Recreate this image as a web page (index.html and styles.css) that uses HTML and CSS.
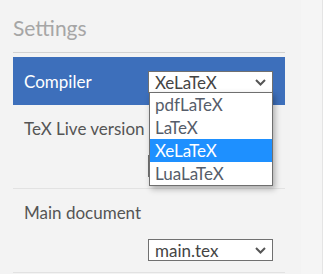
FILE: index.html
```
<!DOCTYPE html>
<html>
<head>
    <meta charset="utf-8">
    <title>Settings</title>
    <link rel="stylesheet" href="styles.css">
</head>
<body>
    <div class="settings">
        <div class="heading">Settings</div>

        <div class="row row-active">
            <span class="label">Compiler</span>
            <div class="select-wrap">
                <div class="select">
                    <span>XeLaTeX</span>
                    <svg class="chevron" width="11" height="7" viewBox="0 0 11 7"><polyline points="1,1 5.5,5.5 10,1" fill="none" stroke="#555" stroke-width="2"/></svg>
                </div>
                <!-- open dropdown list -->
                <ul class="options">
                    <li class="option">pdfLaTeX</li>
                    <li class="option">LaTeX</li>
                    <li class="option option-selected">XeLaTeX</li>
                    <li class="option">LuaLaTeX</li>
                </ul>
            </div>
        </div>

        <div class="row row-stacked">
            <span class="label">TeX Live version</span>
            <!-- hidden under the open list -->
            <div class="select"></div>
        </div>

        <div class="row row-stacked">
            <span class="label">Main document</span>
            <div class="select">
                <span>main.tex</span>
                <svg class="chevron" width="11" height="7" viewBox="0 0 11 7"><polyline points="1,1 5.5,5.5 10,1" fill="none" stroke="#555" stroke-width="2"/></svg>
            </div>
        </div>
    </div>
    <div class="side"></div>
</body>
</html>
```

FILE: styles.css
```
/* General */
html, body {
    margin: 0;
    padding: 0;
    height: 100%;
}
body {
    display: flex;
    background-color: #f3f3f3;
    font-family: 'Lato', 'Liberation Sans', sans-serif;
    overflow: hidden;
}
/* Settings panel */
.settings {
    width: 272px;
    padding: 0 16px 0 13px;
    flex-shrink: 0;
}
.heading {
    font-size: 21px;
    line-height: 26px;
    color: #a6a6a6;
    padding: 15px 0 11px;
    border-bottom: 1px solid #d2d2d2;
    margin-bottom: 4px;
}
/* Rows */
.row {
    padding: 12px 12px 11px 11px;
    border-bottom: 1px solid #e2e2e2;
}
.row-active {
    display: flex;
    align-items: center;
    justify-content: space-between;
    padding: 14px 12px 12px 11px;
    background-color: #3d6fbb;
    border-bottom: none;
}
.row-stacked {
    display: flex;
    flex-direction: column;
    align-items: flex-end;
    gap: 14px;
}
.label {
    font-size: 17px;
    line-height: 24px;
    color: #555555;
    align-self: flex-start;
}
.row-active .label {
    color: #ffffff;
    line-height: 22px;
    align-self: center;
}
/* Select boxes */
.select-wrap {
    position: relative;
}
.select {
    width: 111px;
    height: 20px;
    display: flex;
    align-items: center;
    justify-content: space-between;
    padding: 0 6px;
    border: 1px solid #707070;
    background-color: #ffffff;
    font-size: 17px;
    color: #444444;
}
/* Open dropdown */
.options {
    position: absolute;
    top: 21px;
    left: 1px;
    width: 122px;
    margin: 0;
    padding: 0;
    list-style: none;
    background-color: #ffffff;
    border: 1px solid #6f6f6f;
    box-shadow: 2px 3px 6px rgba(0, 0, 0, 0.3);
    z-index: 2;
}
.option {
    height: 23px;
    line-height: 23px;
    padding-left: 5px;
    font-size: 17px;
    color: #565d6a;
}
.option-selected {
    background-color: #1e90ff;
    color: #ffffff;
}
/* Neighbouring panel */
.side {
    width: 21px;
    flex-shrink: 0;
    background-color: #f5f5f5;
    border-right: 1px solid #e4e4e4;
}
```
